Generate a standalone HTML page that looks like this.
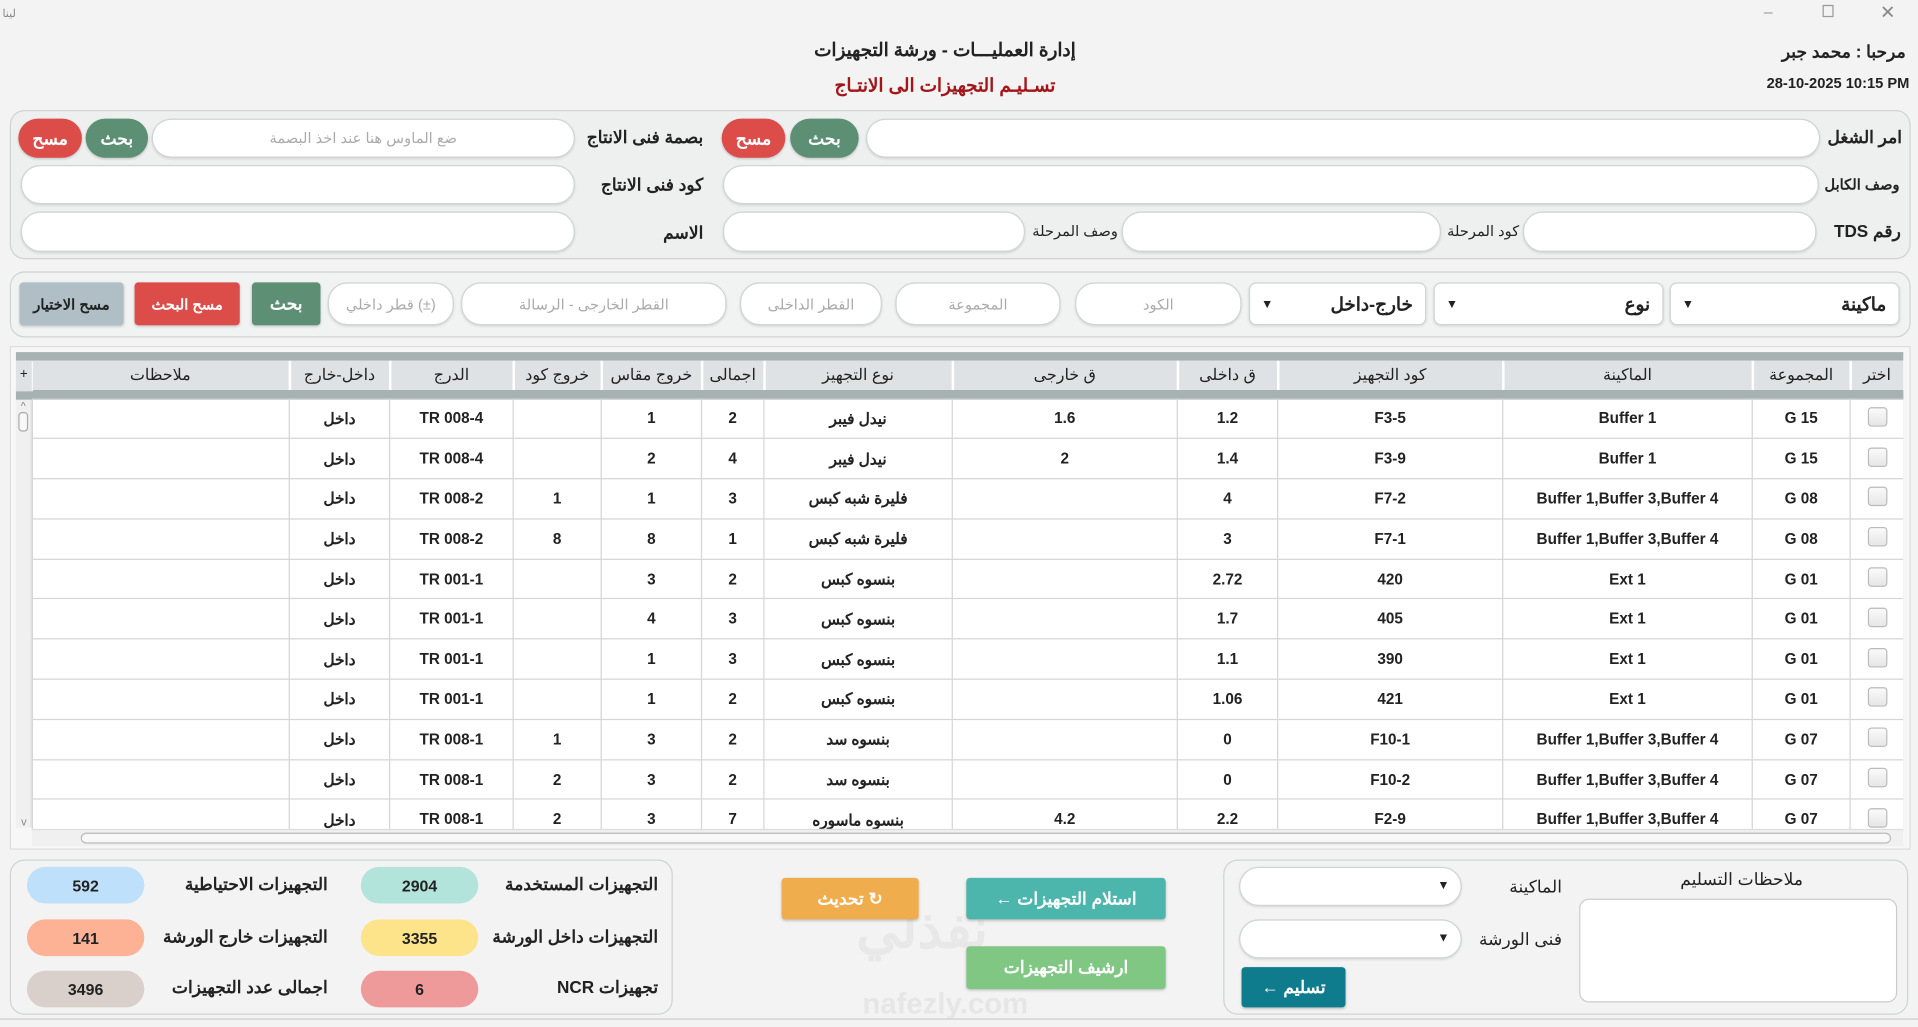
<!DOCTYPE html>
<html><head><meta charset="utf-8">
<style>
*{box-sizing:border-box;margin:0;padding:0}
html,body{width:1918px;height:1027px;overflow:hidden;background:#f3f3f3}
#w{position:absolute;left:0;top:0;width:1568px;height:840px;transform:scale(1.2232,1.2226);transform-origin:0 0;font-family:"Liberation Sans","Noto Sans CJK SC",sans-serif;color:#222}
.a{position:absolute}
.t{position:absolute;white-space:nowrap;font-size:14px;font-weight:bold;direction:rtl}
.in{position:absolute;background:#fff;border:1px solid #cfd4d4;border-radius:16px;box-shadow:0 1px 2px rgba(0,0,0,.12)}
.ph{color:#aaa;font-size:12px;font-weight:normal;display:flex;align-items:center;justify-content:center;height:100%}
.btn{position:absolute;color:#fff;font-size:14px;font-weight:bold;display:flex;align-items:center;justify-content:center;border-radius:16px;box-shadow:0 1px 2px rgba(0,0,0,.2)}
.g{background:#5c8f74}.r{background:#dc4d4a}
.panel{position:absolute;border:1px solid #cfd3d3;border-radius:12px;background:#eef0f0}
table{border-collapse:collapse;table-layout:fixed;font-size:12.5px;font-weight:bold}
td{height:32.8px;border:1px solid #d6d6d6;text-align:center;background:#fff;white-space:nowrap;overflow:hidden}
th{height:24px;background:#dfe2e4;border-right:2px solid #fff;font-weight:normal;font-size:13px}
.cb{display:inline-block;width:16px;height:16px;border:1px solid #bbb;border-radius:3px;background:linear-gradient(#fafafa,#e6e6e6)}
.sel{position:absolute;background:#fff;border:1px solid #cfd4d4;border-radius:6px;font-size:15px;font-weight:bold;box-shadow:0 1px 2px rgba(0,0,0,.1)}
.pill{position:absolute;border-radius:16px;width:96px;height:30px;display:flex;align-items:center;justify-content:center;font-weight:bold;font-size:13px}
</style></head><body><div id="w">
<div class="a" style="left:2px;top:6px;font-size:9px;color:#888">ﻟﻴﻨﺎ</div>
<div class="a" style="left:1442px;top:2px;font-size:13px;color:#999">–</div>
<div class="a" style="left:1490px;top:4px;width:9px;height:10px;border:1px solid #999"></div>
<div class="a" style="left:1537px;top:1px;font-size:15px;color:#888">✕</div>
<div class="t" style="left:650px;top:32px;width:245px;text-align:center;font-size:15px">إدارة العمليـــات - ورشة التجهيزات</div>
<div class="t" style="left:650px;top:61px;width:245px;text-align:center;font-size:15px;color:#a3161a">تسـليـم التجهيزات الى الانتـاج</div>
<div class="t" style="right:10px;top:34px;font-size:14px">مرحبا : محمد جبر</div>
<div class="a" style="right:7px;top:61px;font-size:12px;font-weight:bold">28-10-2025 10:15 PM</div>

<div class="panel" style="left:8px;top:90px;width:1554px;height:122px"></div>
<div class="t" style="right:13px;top:104px">امر الشغل</div>
<div class="in" style="left:708px;top:97px;width:780px;height:32px"></div>
<div class="btn g" style="left:646px;top:97px;width:56px;height:32px">بحث</div>
<div class="btn r" style="left:590px;top:97px;width:52px;height:32px">مسح</div>
<div class="t" style="right:993px;top:104px">بصمة فنى الانتاج</div>
<div class="in" style="left:124px;top:97px;width:346px;height:32px"><div class="ph">ضع الماوس هنا عند اخذ البصمة</div></div>
<div class="btn g" style="left:70px;top:97px;width:51px;height:32px">بحث</div>
<div class="btn r" style="left:15px;top:97px;width:52px;height:32px">مسح</div>
<div class="t" style="right:15px;top:144px;font-size:12px">وصف الكابل</div>
<div class="in" style="left:591px;top:135px;width:896px;height:32px"></div>
<div class="t" style="right:993px;top:143px">كود فنى الانتاج</div>
<div class="in" style="left:17px;top:135px;width:453px;height:32px"></div>
<div class="t" style="right:14px;top:181px">رقم TDS</div>
<div class="in" style="left:1245px;top:173px;width:240px;height:33px"></div>
<div class="t" style="right:326px;top:182px;font-size:12px;font-weight:normal">كود المرحلة</div>
<div class="in" style="left:917px;top:173px;width:261px;height:33px"></div>
<div class="t" style="right:654px;top:182px;font-size:12px;font-weight:normal">وصف المرحلة</div>
<div class="in" style="left:591px;top:173px;width:247px;height:33px"></div>
<div class="t" style="right:993px;top:182px">الاسم</div>
<div class="in" style="left:17px;top:173px;width:453px;height:33px"></div>

<div class="panel" style="left:8px;top:222px;width:1554px;height:54px;background:#f1f2f2"></div>
<div class="sel" style="left:1365px;top:231px;width:188px;height:35px"><span class="a" style="right:10px;top:8px">ماكينة</span><span class="a" style="left:9px;top:12px;font-size:10px">▼</span></div>
<div class="sel" style="left:1172px;top:231px;width:188px;height:35px"><span class="a" style="right:10px;top:8px">نوع</span><span class="a" style="left:9px;top:12px;font-size:10px">▼</span></div>
<div class="sel" style="left:1021px;top:231px;width:145px;height:35px"><span class="a" style="right:10px;top:8px">خارج-داخل</span><span class="a" style="left:9px;top:12px;font-size:10px">▼</span></div>
<div class="in" style="left:879px;top:231px;width:136px;height:35px"><div class="ph">الكود</div></div>
<div class="in" style="left:732px;top:231px;width:135px;height:35px"><div class="ph">المجموعة</div></div>
<div class="in" style="left:605px;top:231px;width:116px;height:35px"><div class="ph">القطر الداخلى</div></div>
<div class="in" style="left:377px;top:231px;width:217px;height:35px"><div class="ph">القطر الخارجى - الرسالة</div></div>
<div class="in" style="left:268px;top:231px;width:103px;height:35px"><div class="ph">قطر داخلي (±)</div></div>
<div class="btn g" style="left:206px;top:231px;width:56px;height:35px;border-radius:3px">بحث</div>
<div class="btn r" style="left:110px;top:231px;width:86px;height:35px;border-radius:3px;font-size:12px">مسح البحث</div>
<div class="btn" style="left:16px;top:231px;width:85px;height:35px;border-radius:3px;background:#b0bec5;color:#222;font-size:12px">مسح الاختيار</div>

<div class="a" style="left:8px;top:283px;width:1554px;height:412px;background:#f7f7f7;border:1px solid #ddd"></div>
<div class="a" style="left:13px;top:288px;width:1543px;height:7px;background:#a6b1b1"></div>
<div class="a" style="left:13px;top:320px;width:1543px;height:7px;background:#a6b1b1"></div>
<div class="a" style="left:13px;top:295px;width:13px;height:25px;background:#dfe2e4;font-size:11px;text-align:center;line-height:22px">+</div>
<div class="a" style="left:13px;top:327px;width:13px;height:350px;background:#f0f0f0;border-right:1px solid #ddd"><div style="font-size:9px;color:#888;text-align:center">^</div><div style="margin:0 2px;height:16px;border:1px solid #aaa;border-radius:3px;background:#f8f8f8"></div><div style="position:absolute;bottom:0;width:13px;text-align:center;font-size:9px;color:#888">v</div></div>
<div class="a" style="left:26px;top:295px;width:1530px;height:383px;overflow:hidden">
<table dir="ltr" style="width:1530px">
<colgroup><col style="width:210px"><col style="width:82px"><col style="width:101px"><col style="width:72px"><col style="width:82px"><col style="width:51px"><col style="width:154px"><col style="width:184px"><col style="width:82px"><col style="width:184px"><col style="width:204px"><col style="width:80px"><col style="width:44px"></colgroup>
<tr><th>ملاحظات</th><th>داخل-خارج</th><th>الدرج</th><th>خروج كود</th><th>خروج مقاس</th><th>اجمالى</th><th>نوع التجهيز</th><th>ق خارجى</th><th>ق داخلى</th><th>كود التجهيز</th><th>الماكينة</th><th>المجموعة</th><th>اختر</th></tr>
<tr><td style="height:7px;border:0;background:#a6b1b1" colspan="13"></td></tr>
<tr><td></td><td>داخل</td><td>TR 008-4</td><td></td><td>1</td><td>2</td><td>نيدل فيبر</td><td>1.6</td><td>1.2</td><td>F3-5</td><td>Buffer 1</td><td>G 15</td><td><span class="cb"></span></td></tr>
<tr><td></td><td>داخل</td><td>TR 008-4</td><td></td><td>2</td><td>4</td><td>نيدل فيبر</td><td>2</td><td>1.4</td><td>F3-9</td><td>Buffer 1</td><td>G 15</td><td><span class="cb"></span></td></tr>
<tr><td></td><td>داخل</td><td>TR 008-2</td><td>1</td><td>1</td><td>3</td><td>فليرة شبه كبس</td><td></td><td>4</td><td>F7-2</td><td>Buffer 1,Buffer 3,Buffer 4</td><td>G 08</td><td><span class="cb"></span></td></tr>
<tr><td></td><td>داخل</td><td>TR 008-2</td><td>8</td><td>8</td><td>1</td><td>فليرة شبه كبس</td><td></td><td>3</td><td>F7-1</td><td>Buffer 1,Buffer 3,Buffer 4</td><td>G 08</td><td><span class="cb"></span></td></tr>
<tr><td></td><td>داخل</td><td>TR 001-1</td><td></td><td>3</td><td>2</td><td>بنسوه كبس</td><td></td><td>2.72</td><td>420</td><td>Ext 1</td><td>G 01</td><td><span class="cb"></span></td></tr>
<tr><td></td><td>داخل</td><td>TR 001-1</td><td></td><td>4</td><td>3</td><td>بنسوه كبس</td><td></td><td>1.7</td><td>405</td><td>Ext 1</td><td>G 01</td><td><span class="cb"></span></td></tr>
<tr><td></td><td>داخل</td><td>TR 001-1</td><td></td><td>1</td><td>3</td><td>بنسوه كبس</td><td></td><td>1.1</td><td>390</td><td>Ext 1</td><td>G 01</td><td><span class="cb"></span></td></tr>
<tr><td></td><td>داخل</td><td>TR 001-1</td><td></td><td>1</td><td>2</td><td>بنسوه كبس</td><td></td><td>1.06</td><td>421</td><td>Ext 1</td><td>G 01</td><td><span class="cb"></span></td></tr>
<tr><td></td><td>داخل</td><td>TR 008-1</td><td>1</td><td>3</td><td>2</td><td>بنسوه سد</td><td></td><td>0</td><td>F10-1</td><td>Buffer 1,Buffer 3,Buffer 4</td><td>G 07</td><td><span class="cb"></span></td></tr>
<tr><td></td><td>داخل</td><td>TR 008-1</td><td>2</td><td>3</td><td>2</td><td>بنسوه سد</td><td></td><td>0</td><td>F10-2</td><td>Buffer 1,Buffer 3,Buffer 4</td><td>G 07</td><td><span class="cb"></span></td></tr>
<tr><td></td><td>داخل</td><td>TR 008-1</td><td>2</td><td>3</td><td>7</td><td>بنسوه ماسوره</td><td>4.2</td><td>2.2</td><td>F2-9</td><td>Buffer 1,Buffer 3,Buffer 4</td><td>G 07</td><td><span class="cb"></span></td></tr>
</table></div>
<div class="a" style="left:26px;top:678px;width:1530px;height:14px;background:#f0f0f0;border-top:1px solid #ddd"><div class="a" style="left:40px;top:2px;width:1480px;height:9px;border:1px solid #bbb;border-radius:5px;background:#f8f8f8"></div></div>

<div class="panel" style="left:8px;top:703px;width:542px;height:127px;background:#f3f3f3"></div>
<div class="pill" style="left:22px;top:709px;background:#bfe0fb">592</div>
<div class="t" style="right:1300px;top:715px">التجهيزات الاحتياطية</div>
<div class="pill" style="left:295px;top:709px;background:#b2e4dc">2904</div>
<div class="t" style="right:1030px;top:715px">التجهيزات المستخدمة</div>
<div class="pill" style="left:22px;top:752px;background:#fdb296">141</div>
<div class="t" style="right:1300px;top:758px">التجهيزات خارج الورشة</div>
<div class="pill" style="left:295px;top:752px;background:#fde38a">3355</div>
<div class="t" style="right:1030px;top:758px">التجهيزات داخل الورشة</div>
<div class="pill" style="left:22px;top:794px;background:#d9d0cc">3496</div>
<div class="t" style="right:1300px;top:799px">اجمالى عدد التجهيزات</div>
<div class="pill" style="left:295px;top:794px;background:#ef9a9a">6</div>
<div class="t" style="right:1030px;top:799px">تجهيزات NCR</div>

<div class="t" style="left:700px;top:735px;font-size:44px;color:#e8e8e8;font-weight:bold">نفذلي</div>
<div class="a" style="left:705px;top:808px;font-size:24px;color:#e6e6e6;font-weight:bold">nafezly.com</div>
<div class="btn" style="left:639px;top:718px;width:112px;height:34px;background:#f0ad4e;border-radius:3px">تحديث ↻</div>
<div class="btn" style="left:790px;top:718px;width:163px;height:34px;background:#4db6ac;border-radius:3px">← استلام التجهيزات</div>
<div class="btn" style="left:790px;top:774px;width:163px;height:35px;background:#81c784;border-radius:3px">ارشيف التجهيزات</div>

<div class="panel" style="left:1000px;top:703px;width:560px;height:127px;background:#f3f3f3"></div>
<div class="in" style="left:1013px;top:709px;width:182px;height:32px"><span class="a" style="right:9px;top:9px;font-size:10px">▼</span></div>
<div class="in" style="left:1013px;top:752px;width:182px;height:32px"><span class="a" style="right:9px;top:9px;font-size:10px">▼</span></div>
<div class="t" style="right:291px;top:717px;font-weight:normal">الماكينة</div>
<div class="t" style="right:291px;top:760px;font-weight:normal">فنى الورشة</div>
<div class="t" style="right:94px;top:711px;font-weight:normal">ملاحظات التسليم</div>
<div class="a" style="left:1291px;top:735px;width:260px;height:85px;background:#fff;border:1px solid #ccc;border-radius:8px"></div>
<div class="btn" style="left:1015px;top:791px;width:85px;height:33px;background:#0e7c8c;border-radius:3px">← تسليم</div>
<div class="a" style="left:0;top:833px;width:1568px;height:1px;background:#ccc"></div>
</div></body></html>
